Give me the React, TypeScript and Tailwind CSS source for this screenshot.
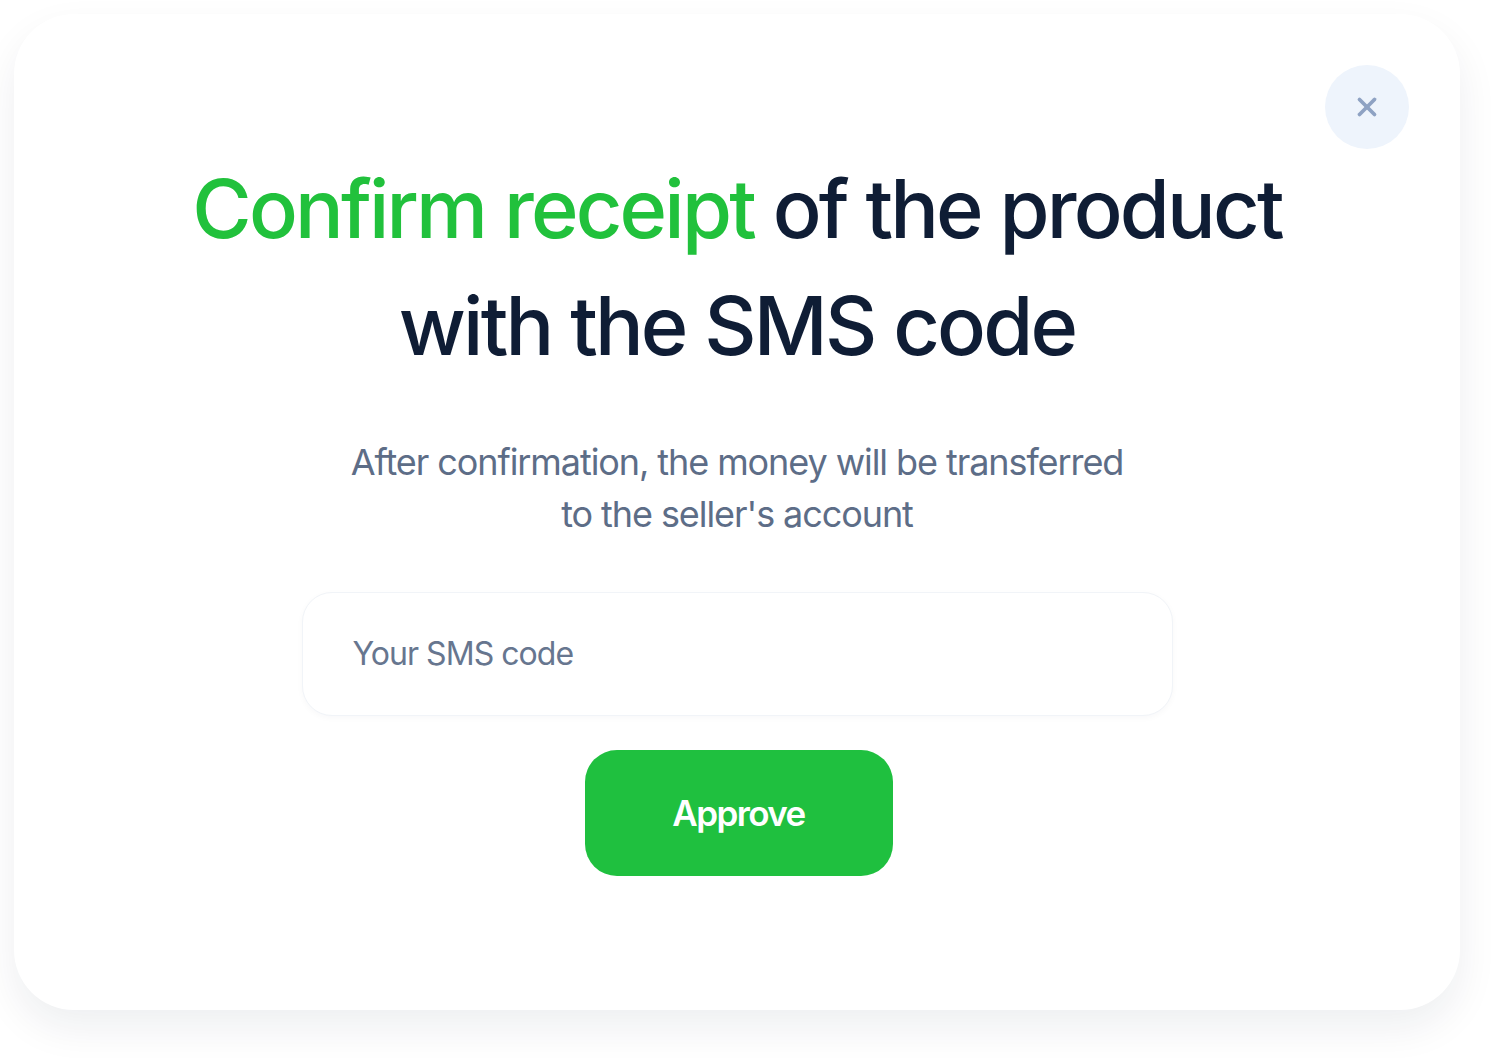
import { X } from "lucide-react";

const ConfirmSmsModal = () => {
  return (
    <div className="min-h-screen bg-white pl-[14px] pt-[14px] font-['Inter',sans-serif]">
      <div className="relative flex h-[996px] w-[1446px] flex-col items-center rounded-[60px] bg-white pt-[137px] shadow-[0_18px_40px_rgba(15,30,54,0.07)]">
        <button className="absolute right-[51px] top-[51px] flex h-[84px] w-[84px] items-center justify-center rounded-full bg-[#eef4fc] text-[#8ea2c3]">
          <X size={30} strokeWidth={3} />
        </button>

        <h1 className="text-center text-[81px] font-medium leading-[117px] tracking-[-0.035em] text-[#0f1d35]">
          <span className="text-[#21c13c]">Confirm receipt</span> of the product
          <br />
          with the SMS code
        </h1>

        <p className="mt-[51px] text-center text-[36px] font-normal leading-[52px] tracking-[-0.03em] text-[#5d6d87]">
          After confirmation, the money will be transferred
          <br />
          to the seller's account
        </p>

        <div className="mt-[52px] flex h-[124px] w-[871px] items-center rounded-[30px] border border-[#f1f4f8] bg-white px-[50px] shadow-[0_2px_6px_rgba(15,30,54,0.03)]">
          <input
            className="w-full bg-transparent text-[32px] tracking-[-0.03em] text-[#0f1d35] outline-none placeholder:text-[#67768f]"
            placeholder="Your SMS code"
          />
        </div>

        <button className="ml-[3px] mt-[34px] flex h-[126px] w-[308px] items-center justify-center rounded-[32px] bg-[#1fc03f] text-[35px] font-semibold tracking-[-0.045em] text-white">
          Approve
        </button>
      </div>
    </div>
  );
};

export default function App() {
  return <ConfirmSmsModal />;
}
